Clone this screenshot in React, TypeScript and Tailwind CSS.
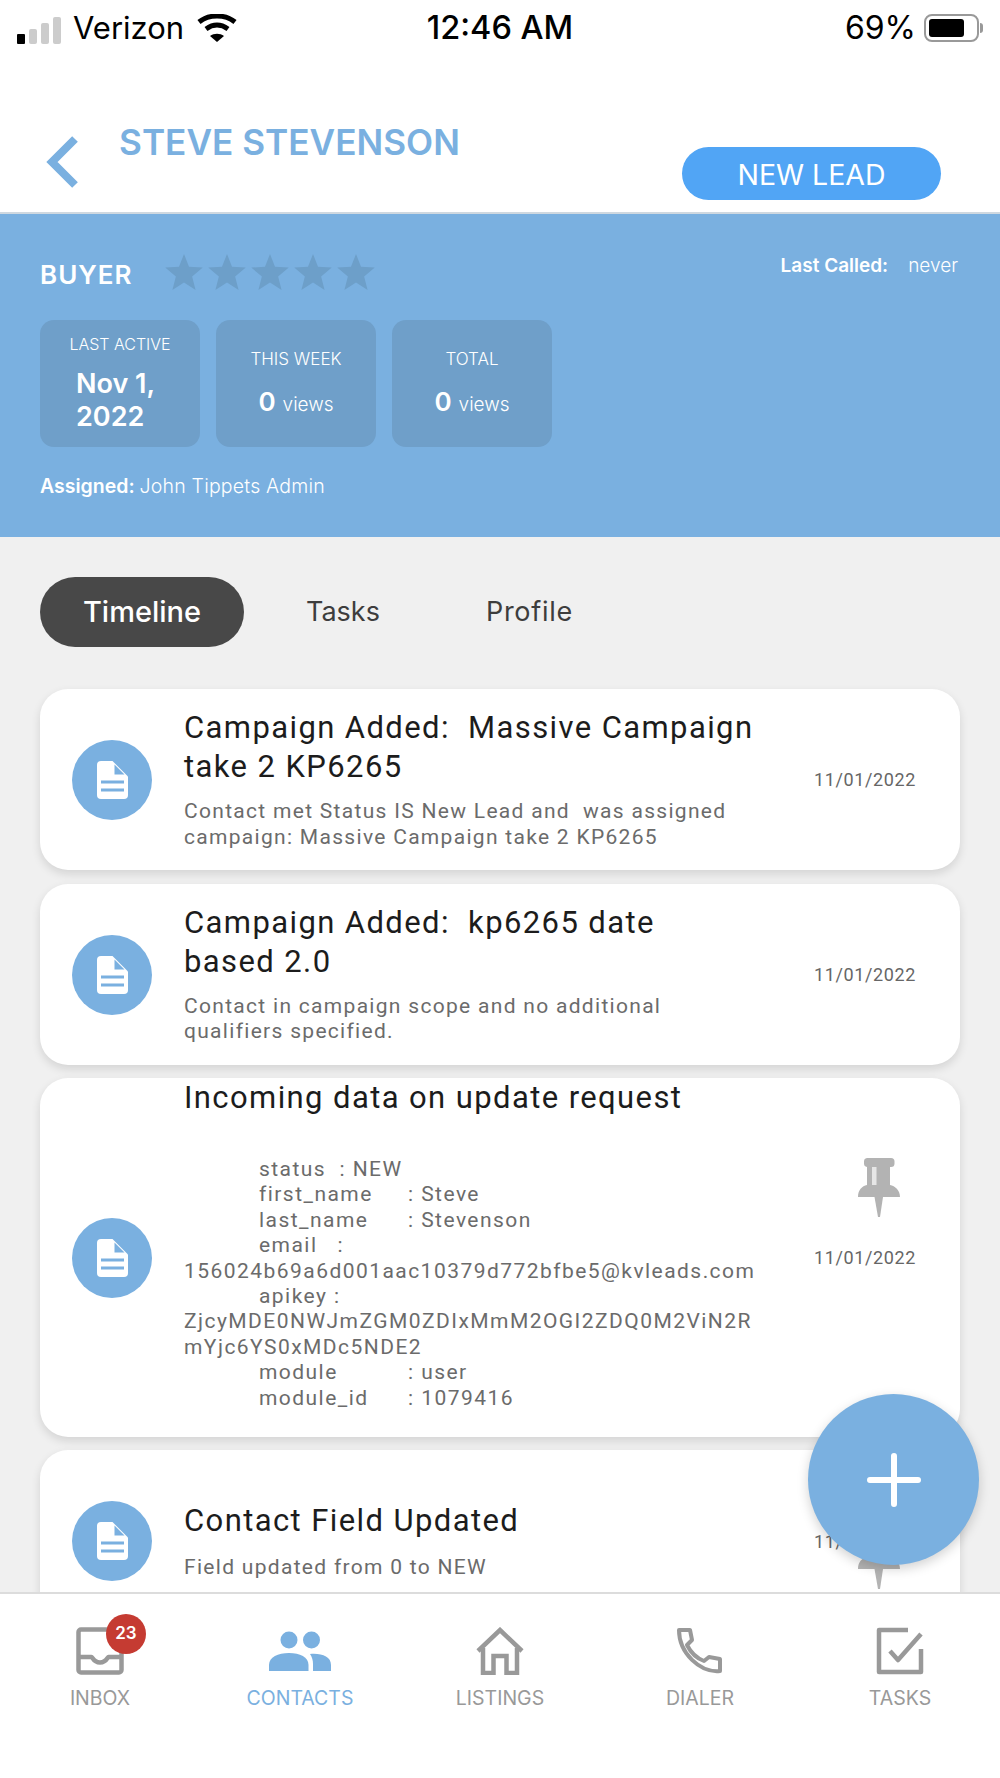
import { ReactNode } from 'react';

const navItems = [
  { label: 'INBOX', active: false },
  { label: 'CONTACTS', active: true },
  { label: 'LISTINGS', active: false },
  { label: 'DIALER', active: false },
  { label: 'TASKS', active: false },
];

function Star() {
  return (
    <svg width="38" height="36" viewBox="0 0 24 23" fill="#6d9fc9">
      <path d="M12 0l3.200 8.200 8.800.5-6.800 5.600 2.200 8.700L12 18.200 4.600 23l2.200-8.700L0 8.700l8.800-.5z" />
    </svg>
  );
}

function Pin() {
  return (
    <svg width="42" height="59" viewBox="0 0 42 59">
      <path fill="#b3b3b3" d="M9 0h24a3.500 3.500 0 0 1 3.500 3.500v2a3.500 3.500 0 0 1-3.500 3.500h-1v18c5 1 10 5 10 12H0c0-7 4-11 9-12V9a3.500 3.500 0 0 1-3-3.500v-2A3.500 3.500 0 0 1 9 0z" />
      <path fill="#b3b3b3" d="M16.500 39h8.500l-3 20h-2z" />
      <path fill="#e6e6e6" d="M14 9h4.500v18H14z" />
    </svg>
  );
}

function DocCircle() {
  return (
    <div className="flex size-20 shrink-0 items-center justify-center rounded-full bg-[#7ab0e0]">
      <svg width="31" height="38" viewBox="0 0 31 38">
        <path fill="#ffffff" d="M4 0h11.500L31 15.500V34a4 4 0 0 1-4 4H4a4 4 0 0 1-4-4V4a4 4 0 0 1 4-4z" />
        <path fill="#7ab0e0" d="M17.500 3.500v10h10z" />
        <path fill="#7ab0e0" d="M4 19.500h23v3H4zM4 27.500h23v3H4z" />
      </svg>
    </div>
  );
}

function NavIcon({ label }: { label: string }) {
  if (label === 'INBOX') {
    return (
      <svg width="48" height="48" viewBox="0 0 48 48" fill="none" stroke="#999999" strokeWidth="4.500" strokeLinejoin="round">
        <rect x="2.500" y="2.500" width="43" height="43" rx="2.500" />
        <path d="M2.500 30h13c1 0 2 5.500 8.500 5.500S31.500 30 32.500 30h13" />
      </svg>
    );
  }
  if (label === 'CONTACTS') {
    return (
      <svg width="62" height="40" viewBox="0 0 62 40" fill="#7ab0e0">
        <circle cx="20" cy="9" r="8.500" />
        <circle cx="42.500" cy="9" r="8.500" />
        <path d="M0 40v-6c0-8 9-12 20-12s19.500 4 19.500 12v6z" />
        <path d="M41 23c11-1 21 2 21 11v6H44v-7c0-4-1-7-3-10z" />
      </svg>
    );
  }
  if (label === 'LISTINGS') {
    return (
      <svg width="50" height="48" viewBox="0 0 50 48" fill="none" stroke="#999999" strokeWidth="4.500">
        <path d="M3 24L25 3l22 21" />
        <path d="M8 21v25h10.500V29h13v17H42V21" />
      </svg>
    );
  }
  if (label === 'DIALER') {
    return (
      <svg width="48" height="48" viewBox="0 0 48 48" fill="none" stroke="#999999" strokeWidth="4" strokeLinejoin="round">
        <path d="M3 3h11l2 10-5 5c4 8 9 13 17 16l5-4 11 2v12C24 46 3 26 3 3z" />
      </svg>
    );
  }
  return (
    <svg width="48" height="48" viewBox="0 0 48 48" fill="none" stroke="#999999" strokeWidth="4.500" strokeLinejoin="round">
      <path d="M32 3H3v42h42V22" />
      <path d="M14 24l8 9L45 7" />
    </svg>
  );
}

function Stat({ title, children }: { title: string; children: ReactNode }) {
  return (
    <div className="flex h-[127px] w-[160px] flex-col items-center justify-center rounded-[14px] bg-[#6f9fc9] pt-[4px] text-white">
      <div className="text-[17px] leading-[20px] font-light">{title}</div>
      {children}
    </div>
  );
}

function Views() {
  return (
    <div className="mt-[16px] flex items-baseline gap-[7px] leading-[34px]">
      <span className="text-[26px] font-semibold">0</span>
      <span className="text-[19px] font-light">views</span>
    </div>
  );
}

function Card({ title, children, right, className }: { title: ReactNode; children: ReactNode; right: ReactNode; className: string }) {
  return (
    <div className={`flex shrink-0 items-center rounded-[28px] bg-white pl-[32px] shadow-[0_4px_10px_rgba(0,0,0,0.12)] ${className}`}>
      <DocCircle />
      <div className="ml-[32px] w-[575px] shrink-0 font-['Roboto',sans-serif]">
        <div className="text-[31px] leading-[39px] tracking-[1.4px] whitespace-pre-wrap text-[#1c1c1c]">{title}</div>
        {children}
      </div>
      <div className="ml-[56px] flex w-[100px] flex-col items-center">{right}</div>
    </div>
  );
}

function DateText() {
  return <div className="font-['Roboto',sans-serif] text-[18px] leading-[25px] tracking-[0.6px] whitespace-nowrap text-[#666666]">11/01/2022</div>;
}

const desc = 'text-[21px] leading-[25.400px] tracking-[1.300px] text-[#6b6b6b]';

export default function App() {
  return (
    <div className="flex h-[1778px] w-[1000px] flex-col overflow-hidden bg-white font-['Inter',sans-serif]">
      {/* Status bar */}
      <div className="grid h-[56px] shrink-0 grid-cols-3 items-center pr-[17px] pl-[17px] text-[30px] text-black">
        <div className="flex items-center">
          <div className="mt-[4px] flex items-end gap-[4px]">
            <div className="h-[10px] w-[8px] rounded-[1px] bg-black" />
            <div className="h-[15px] w-[8px] rounded-[2px] bg-[#cccccc]" />
            <div className="h-[21px] w-[8px] rounded-[2px] bg-[#cccccc]" />
            <div className="h-[27px] w-[8px] rounded-[2px] bg-[#cccccc]" />
          </div>
          <span className="ml-[12px] text-[31px] whitespace-nowrap">Verizon</span>
          <svg className="ml-[13px] shrink-0" width="40" height="28" viewBox="0 0 40 28" fill="none" stroke="#000000" strokeWidth="5">
            <path d="M2 8c10-8 26-8 36 0" />
            <path d="M9 15c7-5 15-5 22 0" />
            <path d="M20 28l-7-6c4-3 10-3 14 0z" fill="#000000" stroke="none" />
          </svg>
        </div>
        <div className="text-center text-[32.500px] font-medium whitespace-nowrap">12:46 AM</div>
        <div className="flex items-center justify-end">
          <span className="text-[32px]">69%</span>
          <div className="ml-[8px] flex h-[28px] w-[55px] items-center rounded-[8px] border-2 border-[#999999] p-[3px]">
            <div className="h-full w-[35px] rounded-[3px] bg-black" />
          </div>
          <div className="ml-[1px] h-[10px] w-[3px] rounded-r-full bg-[#999999]" />
        </div>
      </div>

      {/* Header */}
      <div className="relative h-[158px] shrink-0 border-b-2 border-[#cfd8e0]">
        <svg className="absolute top-[80px] left-[46px]" width="34" height="52" viewBox="0 0 34 52" fill="none" stroke="#7ab0e0" strokeWidth="8" strokeLinejoin="miter">
          <path d="M29 3L6 26l23 23" />
        </svg>
        <div className="absolute top-[64px] left-[119px] text-[35.200px] leading-[44px] font-semibold whitespace-nowrap text-[#7ab0e0]">STEVE STEVENSON</div>
        <div className="absolute top-[91px] left-[682px] flex h-[53px] w-[259px] items-center justify-center rounded-full bg-[#51a5f5] pt-[3px] text-[28.500px] font-normal text-white">NEW LEAD</div>
      </div>

      {/* Lead summary */}
      <div className="h-[323px] shrink-0 bg-[#7ab0e0] px-[40px] pt-[37px] text-white">
        <div className="flex h-[48px] items-start">
          <div className="mt-[7px] w-[125px] text-[26px] leading-[34px] font-semibold tracking-[1px]">BUYER</div>
          <div className="mt-[3px] flex gap-[5px]">
            <Star />
            <Star />
            <Star />
            <Star />
            <Star />
          </div>
          <div className="mt-[3px] mr-[2px] ml-auto flex gap-[20px] text-[19px] leading-[24px]">
            <span className="font-semibold">Last Called:</span>
            <span className="font-light">never</span>
          </div>
        </div>
        <div className="mt-[21px] flex gap-[16px]">
          <div className="flex h-[127px] w-[160px] flex-col rounded-[14px] bg-[#6f9fc9] pt-[14px]">
            <div className="text-center text-[16px] leading-[20px] font-light">LAST ACTIVE</div>
            <div className="mt-[13px] ml-[36px] w-[106px] text-[27px] leading-[33px] font-semibold">
              Nov 1, 2022
            </div>
          </div>
          <Stat title="THIS WEEK">
            <Views />
          </Stat>
          <Stat title="TOTAL">
            <Views />
          </Stat>
        </div>
        <div className="mt-[27px] text-[19.500px] leading-[24px]">
          <span className="font-semibold">Assigned: </span>
          <span className="font-light tracking-[0.2px]">John Tippets Admin</span>
        </div>
      </div>

      {/* Timeline */}
      <div className="relative min-h-0 flex-1 overflow-hidden bg-[#f0f0f0] px-[40px] pt-[40px]">
        <div className="flex h-[70px] items-center text-[27px] text-[#3d3d3d]">
          <div className="flex h-full w-[204px] items-center justify-center rounded-full bg-[#484848] text-[29px] font-medium text-white">Timeline</div>
          <div className="ml-[62px] w-[75px]">Tasks</div>
          <div className="ml-[105px] tracking-[0.7px]">Profile</div>
        </div>
        <div className="mt-[42px] flex w-[920px] flex-col gap-[13px]">
          <Card
            className="h-[181px]"
            title={<div className="mt-[-1px] mb-[1px]">Campaign Added:  Massive Campaign take 2 KP6265</div>}
            right={<DateText />}
          >
            <div className={`mt-[13px] w-[560px] ${desc}`}>Contact met Status IS New Lead and&nbsp; was assigned campaign: Massive Campaign take 2 KP6265</div>
          </Card>
          <Card
            className="mt-[1px] h-[181px]"
            title={(
              <div className="mt-[-2px] mb-[2px]">
                Campaign Added:  kp6265 date
                <br />
                based 2.0
              </div>
            )}
            right={<DateText />}
          >
            <div className={`mt-[13px] w-[540px] ${desc}`}>Contact in campaign scope and no additional qualifiers specified.</div>
          </Card>
          <Card
            className="h-[359px]"
            title="Incoming data on update request"
            right={(
              <div className="flex flex-col items-center pb-[88px]">
                <div className="mt-[1px] ml-[27px]">
                  <Pin />
                </div>
                <div className="mt-[28px]">
                  <DateText />
                </div>
              </div>
            )}
          >
            <div className="mt-[40px] pb-[26px] text-[21px] leading-[25.400px] tracking-[1.450px] text-[#6b6b6b]">
              <div className="pl-[75px]">status&nbsp; : NEW</div>
              <div className="flex pl-[75px]"><span className="w-[149px]">first_name</span><span>: Steve</span></div>
              <div className="flex pl-[75px]"><span className="w-[149px]">last_name</span><span>: Stevenson</span></div>
              <div className="pl-[75px]">email &nbsp; :</div>
              <div>156024b69a6d001aac10379d772bfbe5@kvleads.com</div>
              <div className="pl-[75px]">apikey :</div>
              <div className="whitespace-nowrap">ZjcyMDE0NWJmZGM0ZDIxMmM2OGI2ZDQ0M2ViN2R</div>
              <div>mYjc6YS0xMDc5NDE2</div>
              <div className="flex pl-[75px]"><span className="w-[149px]">module</span><span>: user</span></div>
              <div className="flex pl-[75px]"><span className="w-[149px]">module_id</span><span>: 1079416</span></div>
            </div>
          </Card>
          <Card
            className="h-[182px]"
            title="Contact Field Updated"
            right={(
              <div className="flex h-[25px] flex-col items-center">
                <DateText />
                <div className="mt-[-24px] ml-[27px]">
                  <Pin />
                </div>
              </div>
            )}
          >
            <div className={`mt-[15px] ${desc}`}>Field updated from 0 to NEW</div>
          </Card>
        </div>

        {/* Add button */}
        <div className="absolute top-[857px] left-[808px] flex size-[171px] items-center justify-center rounded-full bg-[#7ab0e0] shadow-[0_4px_12px_rgba(0,0,0,0.18)]">
          <svg width="54" height="54" viewBox="0 0 54 54" fill="none" stroke="#ffffff" strokeWidth="6" strokeLinecap="round">
            <path d="M27 3v48M3 27h48" />
          </svg>
        </div>
      </div>

      {/* Bottom nav */}
      <div className="flex h-[186px] shrink-0 border-t-2 border-[#dcdcdc] bg-white pt-[33px]">
        {navItems.map(item => (
          <div key={item.label} className="flex w-[200px] flex-col items-center">
            <div className="relative flex h-[48px] items-center justify-center">
              <NavIcon label={item.label} />
              {item.label === 'INBOX' && (
                <div className="absolute top-[-13px] left-[30px] flex size-[40px] items-center justify-center rounded-full bg-[#c53b32] text-[17px] font-semibold text-white">23</div>
              )}
            </div>
            <div className={`mt-[11px] text-[19.500px] leading-[24px] ${item.active ? 'text-[#7ab0e0]' : 'text-[#999999]'}`}>{item.label}</div>
          </div>
        ))}
      </div>
    </div>
  );
}
